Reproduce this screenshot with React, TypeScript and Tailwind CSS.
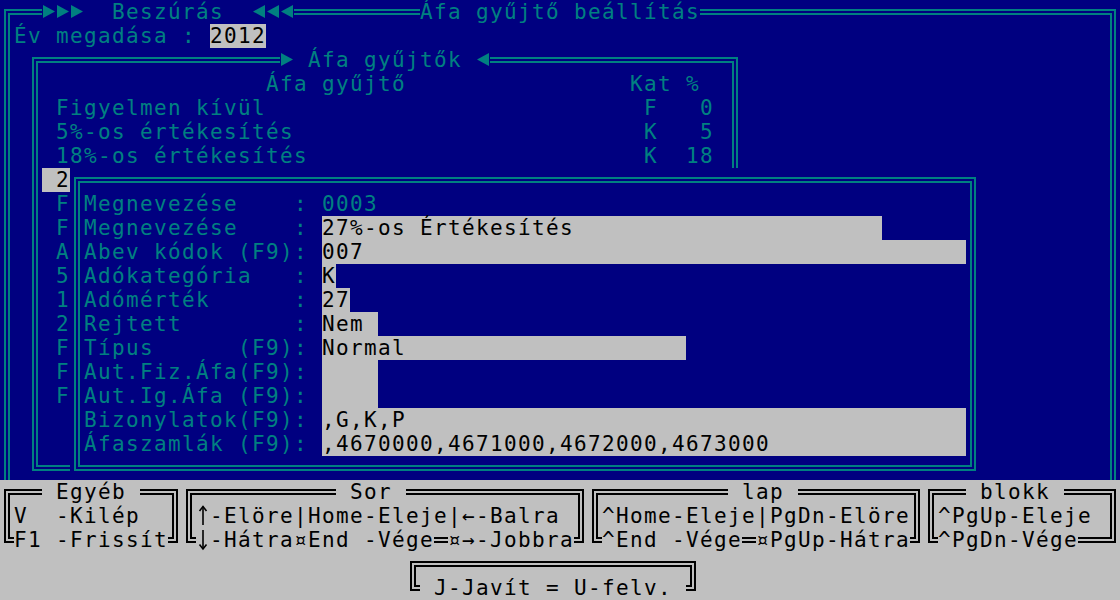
import type { ReactNode } from 'react';

// grey input field / highlight cell, one text row high
const field = 'inline-block h-[24px] align-top bg-[#c0c0c0] text-black';

// builds a text line starting at column `start`, each segment at its own column
function at(start: number, segs: [number, string][]) {
  let s = '';
  for (const [col, t] of segs) s = s.padEnd(col - start) + t;
  return s;
}

function Row({ children }: { children?: ReactNode }) {
  return <div className="h-[24px] whitespace-pre">{children}</div>;
}

function Field({ text, w }: { text: string; w: number }) {
  return <span className={field}>{text.padEnd(w)}</span>;
}

// text-mode ► / ◄ glyph, one cell wide
function Tri({ dir }: { dir: 'r' | 'l' }) {
  return (
    <svg className="inline-block h-[24px] w-[14px] align-top" viewBox="0 0 14 24">
      <polygon points={dir === 'r' ? '1,5 13,11.5 1,18' : '13,5 1,11.5 13,18'} fill="#008080" />
    </svg>
  );
}

// the tall code page ↑ / ↓ arrows, one cell wide
function Arrow({ dir }: { dir: 'up' | 'down' }) {
  return (
    <svg className="inline-block h-[24px] w-[14px] align-top" viewBox="0 0 14 24" fill="none" stroke="black" strokeWidth="1.6">
      {dir === 'up' ? (
        <>
          <path d="M7 2.5V21" />
          <path d="M3.5 7L7 2.5L10.5 7" />
        </>
      ) : (
        <>
          <path d="M7 2V21" />
          <path d="M3.5 16.5L7 21L10.5 16.5" />
        </>
      )}
    </svg>
  );
}

const list: string[] = [
  at(3, [[4, 'Figyelmen kívül'], [46, 'F'], [50, '0']]),
  at(3, [[4, '5%-os értékesítés'], [46, 'K'], [50, '5']]),
  at(3, [[4, '18%-os értékesítés'], [46, 'K'], [49, '18']]),
];
const hidden = ['F', 'F', 'A', '5', '1', '2', 'F', 'F', 'F'];

const form: { label: string; value?: string; w?: number }[] = [
  { label: 'Megnevezése    ', value: '0003' },
  { label: 'Megnevezése    ', value: '27%-os Értékesítés', w: 40 },
  { label: 'Abev kódok (F9)', value: '007', w: 46 },
  { label: 'Adókategória   ', value: 'K', w: 1 },
  { label: 'Adómérték      ', value: '27', w: 2 },
  { label: 'Rejtett        ', value: 'Nem', w: 4 },
  { label: 'Típus      (F9)', value: 'Normal', w: 26 },
  { label: 'Aut.Fiz.Áfa(F9)', value: '', w: 4 },
  { label: 'Aut.Ig.Áfa (F9)', value: '', w: 4 },
  { label: 'Bizonylatok(F9)', value: ',G,K,P', w: 46 },
  { label: 'Áfaszamlák (F9)', value: ',4670000,4671000,4672000,4673000', w: 46 },
];

function Gap() {
  return <span className="inline-block h-[24px] w-[14px] align-top" />;
}

function Box({ title, left, w, lines }: { title: string; left: string; w: string; lines: [ReactNode, ReactNode] }) {
  return (
    <div className={`relative h-[54px] shrink-0 border-[6px] border-double border-black pl-[4px] pt-[9px] ${w}`}>
      <span className={`absolute -top-[15px] h-[24px] whitespace-pre bg-[#c0c0c0] ${left}`}>{title}</span>
      <Row>{lines[0]}</Row>
      <Row>{lines[1]}</Row>
    </div>
  );
}

export default function App() {
  return (
    <div className="h-[600px] w-[1120px] overflow-hidden font-['DejaVu_Sans_Mono',monospace] text-[21px] leading-[24px] tracking-[1.357px]">
      {/* blue work area, rows 0-19 */}
      <div className="relative h-[480px] overflow-hidden bg-[#000080] text-[#008080]">
        <div className="absolute left-[4px] top-[9px] h-[520px] w-[1112px] border-[6px] border-double border-[#008080] pl-[4px] pt-[9px]">
          <Row>
            Év megadása : <span className={field}>2012</span>
          </Row>
        </div>
        <span className="absolute left-[42px] top-0 h-[24px] whitespace-pre bg-[#000080]">
          <Tri dir="r" />
          <Tri dir="r" />
          <Tri dir="r" />
          {'  Beszúrás  '}
          <Tri dir="l" />
          <Tri dir="l" />
          <Tri dir="l" />
        </span>
        <span className="absolute left-[420px] top-0 h-[24px] whitespace-pre bg-[#000080]">Áfa gyűjtő beállítás</span>

        <div className="absolute left-[32px] top-[57px] h-[414px] w-[706px] border-[6px] border-double border-[#008080] pl-[4px] pt-[9px]">
          <Row>{at(3, [[19, 'Áfa gyűjtő'], [45, 'Kat %']])}</Row>
          {list.map((l, i) => (
            <Row key={i}>{l}</Row>
          ))}
          <Row>
            <span className={field}>{at(3, [[4, '27%-os értékesítés'], [46, 'K'], [49, '27']]).padEnd(49)}</span>
          </Row>
          {hidden.map((c, i) => (
            <Row key={i}> {c}</Row>
          ))}
        </div>
        <span className="absolute left-[280px] top-[48px] h-[24px] whitespace-pre bg-[#000080]">
          <Tri dir="r" />
          {' Áfa gyűjtők '}
          <Tri dir="l" />
        </span>

        {/* edit dialog, covers whole cells cols 5-69, rows 7-19 */}
        <div className="absolute left-[70px] top-[168px] h-[312px] w-[910px] bg-[#000080] px-[4px] py-[9px]">
          <div className="h-full border-[6px] border-double border-[#008080] pl-[4px] pt-[9px]">
            {form.map((f, i) => (
              <Row key={i}>
                {f.label}: {f.w === undefined ? f.value : <Field text={f.value ?? ''} w={f.w} />}
              </Row>
            ))}
          </div>
        </div>
      </div>

      {/* key help, rows 20-24 */}
      <div className="h-[120px] bg-[#c0c0c0] text-black">
        <div className="flex gap-[8px] pl-[4px] pt-[9px]">
          <Box
            title=" Egyéb "
            left="left-[32px]"
            w="w-[174px]"
            lines={['V  -Kilép', <span className={field}>F1 -Frissít</span>]}
          />
          <Box
            title=" Sor "
            left="left-[144px]"
            w="w-[398px]"
            lines={[
              <>
                <Arrow dir="up" />
                -Elöre|Home-Eleje|←-Balra
              </>,
              <>
                <span className={field}>
                  <Arrow dir="down" />
                  -Hátra¤End -Vége
                </span>
                <Gap />
                <span className={field}>¤→-Jobbra</span>
              </>,
            ]}
          />
          <Box
            title=" lap "
            left="left-[130px]"
            w="w-[328px]"
            lines={[
              '^Home-Eleje|PgDn-Elöre',
              <>
                <span className={field}>^End -Vége</span>
                <Gap />
                <span className={field}>¤PgUp-Hátra</span>
              </>,
            ]}
          />
          <Box
            title=" blokk "
            left="left-[32px]"
            w="w-[188px]"
            lines={['^PgUp-Eleje', <span className={field}>^PgDn-Vége</span>]}
          />
        </div>
        <div className="ml-[410px] mt-[18px] h-[30px] w-[286px] border-[6px] border-double border-black pl-[4px] pt-[9px]">
          <Row>
            <span className={field}> J-Javít = U-felv. </span>
          </Row>
        </div>
      </div>
    </div>
  );
}
